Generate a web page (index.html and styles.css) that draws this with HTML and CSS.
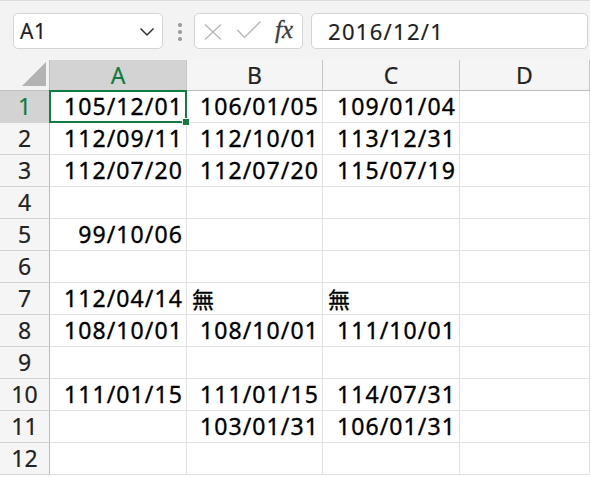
FILE: index.html
```html
<!DOCTYPE html>
<html>
<head>
<meta charset="utf-8">
<link rel="stylesheet" href="styles.css">
</head>
<body>
<div class="app">
  <div class="fbar">
    <div class="namebox">
      <span class="nb-text">A1</span>
      <svg class="chev" width="16" height="10" viewBox="0 0 16 10"><path d="M1.5 1.5 L8 8 L14.5 1.5" fill="none" stroke="#333" stroke-width="1.5"/></svg>
    </div>
    <div class="dots"><i></i><i></i><i></i></div>
    <div class="fxbox">
      <svg class="ic-x" width="20" height="18" viewBox="0 0 20 18"><path d="M2 1.5 L18 16.5 M18 1.5 L2 16.5" stroke="#b9b9b9" stroke-width="1.5" fill="none"/></svg>
      <svg class="ic-ok" width="26" height="20" viewBox="0 0 26 20"><path d="M1.5 10 L8.5 17.5 L24.5 1.5" stroke="#b9b9b9" stroke-width="1.5" fill="none"/></svg>
      <span class="fx">fx</span>
    </div>
    <div class="finput">2016/12/1</div>
  </div>
  <div class="sheet">
    <div class="corner"><svg width="26" height="25" viewBox="0 0 26 25"><path d="M25 0 L25 24 L1 24 Z" fill="#b3b3b3"/></svg></div>
    <div class="ch sel">A</div><div class="ch">B</div><div class="ch">C</div><div class="ch">D</div>

    <div class="rh sel">1</div><div class="c r a1">105/12/01<span class="selbox"><span class="handle"></span></span></div><div class="c r">106/01/05</div><div class="c r">109/01/04</div><div class="c"></div>
    <div class="rh">2</div><div class="c r">112/09/11</div><div class="c r">112/10/01</div><div class="c r">113/12/31</div><div class="c"></div>
    <div class="rh">3</div><div class="c r">112/07/20</div><div class="c r">112/07/20</div><div class="c r">115/07/19</div><div class="c"></div>
    <div class="rh">4</div><div class="c"></div><div class="c"></div><div class="c"></div><div class="c"></div>
    <div class="rh">5</div><div class="c r">99/10/06</div><div class="c"></div><div class="c"></div><div class="c"></div>
    <div class="rh">6</div><div class="c"></div><div class="c"></div><div class="c"></div><div class="c"></div>
    <div class="rh">7</div><div class="c r">112/04/14</div><div class="c l">無</div><div class="c l">無</div><div class="c"></div>
    <div class="rh">8</div><div class="c r">108/10/01</div><div class="c r">108/10/01</div><div class="c r">111/10/01</div><div class="c"></div>
    <div class="rh">9</div><div class="c"></div><div class="c"></div><div class="c"></div><div class="c"></div>
    <div class="rh">10</div><div class="c r">111/01/15</div><div class="c r">111/01/15</div><div class="c r">114/07/31</div><div class="c"></div>
    <div class="rh">11</div><div class="c"></div><div class="c r">103/01/31</div><div class="c r">106/01/31</div><div class="c"></div>
    <div class="rh">12</div><div class="c"></div><div class="c"></div><div class="c"></div><div class="c"></div>
  </div>
</div>
</body>
</html>
```
FILE: styles.css
```css
* { box-sizing: border-box; }
html, body { margin: 0; padding: 0; }
body {
  width: 590px;
  height: 477px;
  overflow: hidden;
  background: #ffffff;
  font-family: "Noto Sans", "Noto Sans CJK TC", sans-serif;
  color: #000;
}
.app { width: 590px; height: 477px; overflow: hidden; }

.fbar {
  height: 60px;
  background: #f3f3f3;
  border-top: 1px solid #dcdcdc;
  display: flex;
  align-items: flex-start;
  padding: 12px 0 0 13px;
}
.namebox {
  width: 150px;
  height: 36px;
  background: #fff;
  border: 1px solid #d4d4d4;
  border-radius: 5px;
  display: flex;
  align-items: center;
  justify-content: space-between;
  padding: 0 7px 0 6px;
}
.nb-text {
  font-size: 21px;
  color: #1f1f1f;
  letter-spacing: 0.6px;
  line-height: 1;
  -webkit-text-stroke: 0.2px #1f1f1f;
}
.chev { margin-top: 1px; }
.dots {
  margin-left: 15px;
  margin-top: 10px;
  width: 4px;
  display: flex;
  flex-direction: column;
  gap: 3.5px;
}
.dots i {
  display: block;
  width: 3.5px;
  height: 3.5px;
  border-radius: 50%;
  background: #9c9c9c;
}
.fxbox {
  margin-left: 12px;
  width: 109px;
  height: 36px;
  background: #fff;
  border: 1px solid #d4d4d4;
  border-radius: 5px;
  display: flex;
  align-items: center;
  padding-left: 8px;
}
.ic-x { margin-top: 1px; }
.ic-ok { margin-left: 13px; margin-top: -3px; }
.fx {
  margin-left: 13px;
  font-family: "Liberation Serif", serif;
  font-style: italic;
  font-size: 25px;
  color: #3c3c3c;
  line-height: 1;
  margin-top: -3px;
  -webkit-text-stroke: 0.3px #3c3c3c;
}
.finput {
  margin-left: 8px;
  flex: 1;
  margin-right: 2px;
  height: 36px;
  background: #fff;
  border: 1px solid #d4d4d4;
  border-radius: 5px;
  font-size: 22px;
  letter-spacing: 1.3px;
  color: #1f1f1f;
  line-height: 34px;
  padding-left: 16px;
  -webkit-text-stroke: 0.2px #1f1f1f;
}

.sheet {
  display: grid;
  grid-template-columns: 50px 137px 136px 137px 1fr;
  grid-template-rows: 31px repeat(12, 32px);
  font-size: 23px;
}
.corner {
  background: #f3f3f3;
  border-right: 1px solid #bdbdbd;
  border-bottom: 1px solid #bdbdbd;
  display: flex;
  align-items: flex-end;
  justify-content: flex-end;
  padding: 0 2px 2px 0;
}
.corner svg { display: block; margin-bottom: 1px; }
.ch {
  background: #f5f5f5;
  border-right: 1px solid #c6c6c6;
  border-bottom: 1px solid #bdbdbd;
  text-align: center;
  line-height: 30px;
  color: #222;
  -webkit-text-stroke: 0.2px #222;
}
.rh {
  background: #f5f5f5;
  border-right: 1px solid #bdbdbd;
  border-bottom: 1px solid #d4d4d4;
  text-align: center;
  line-height: 31px;
  color: #222;
  -webkit-text-stroke: 0.2px #222;
}
.ch.sel, .rh.sel {
  background: #d3d3d3;
  color: #107c41;
  -webkit-text-stroke: 0.2px #107c41;
}
.c {
  border-right: 1px solid #e0e0e0;
  border-bottom: 1px solid #e0e0e0;
  line-height: 31px;
  white-space: nowrap;
  overflow: visible;
  letter-spacing: 1.1px;
  -webkit-text-stroke: 0.35px #000;
}
.c.r { text-align: right; padding-right: 3px; }
.c.l { text-align: left; padding-left: 5px; font-family: "Noto Sans CJK TC", sans-serif; font-size: 22px; letter-spacing: 0; }
.a1 { position: relative; }
.selbox {
  position: absolute;
  left: -1px;
  top: -1px;
  right: -1px;
  bottom: -1px;
  border: 2px solid #107c41;
}
.handle {
  position: absolute;
  right: -5px;
  bottom: -5px;
  width: 8px;
  height: 8px;
  background: #107c41;
  border: 1px solid #fff;
}
```
